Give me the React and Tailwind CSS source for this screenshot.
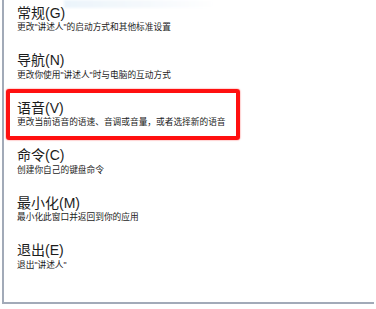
import React from 'react';

const ITEMS = [
    { title: '常规(G)', desc: '更改"讲述人"的启动方式和其他标准设置' },
    { title: '导航(N)', desc: '更改你使用"讲述人"时与电脑的互动方式' },
    { title: '语音(V)', desc: '更改当前语音的语速、音调或音量，或者选择新的语音' },
    { title: '命令(C)', desc: '创建你自己的键盘命令' },
    { title: '最小化(M)', desc: '最小化此窗口并返回到你的应用' },
    { title: '退出(E)', desc: '退出"讲述人"' },
];

export default function App() {
    return (
        <div className="w-[376px] h-[309px] bg-white overflow-hidden" style={{ fontFamily: '"Liberation Sans", "Noto Sans CJK SC", sans-serif' }}>
            <div className="relative ml-[2px] w-[372px] h-[304px] border-l-2 border-b-2 border-[#a2aab8]">
                {/* faded banner remnant at top */}
                <div className="absolute left-[60px] top-0 w-[150px] h-[8px] bg-gradient-to-r from-[#dfeefa] via-[#eef5fb] to-white opacity-60 blur-[1px]" />

                <div className="pt-[4.5px] pl-[13px] relative">
                    {ITEMS.map((item) => (
                        <div key={item.title} className="h-[47.6px]">
                            <div className="text-[14px] leading-[16px] text-[#1c1c1c]">{item.title}</div>
                            <div className="mt-[0.5px] text-[8.7px] leading-[12px] text-[#1c1c1c] whitespace-nowrap">{item.desc}</div>
                        </div>
                    ))}
                </div>

                {/* red highlight annotation */}
                <div className="absolute left-[2px] top-[89px] w-[234px] h-[51px] border-4 border-[#ff1010] rounded-[3px] shadow-[0_0_1.5px_#ff3030]" />
            </div>
        </div>
    );
}
